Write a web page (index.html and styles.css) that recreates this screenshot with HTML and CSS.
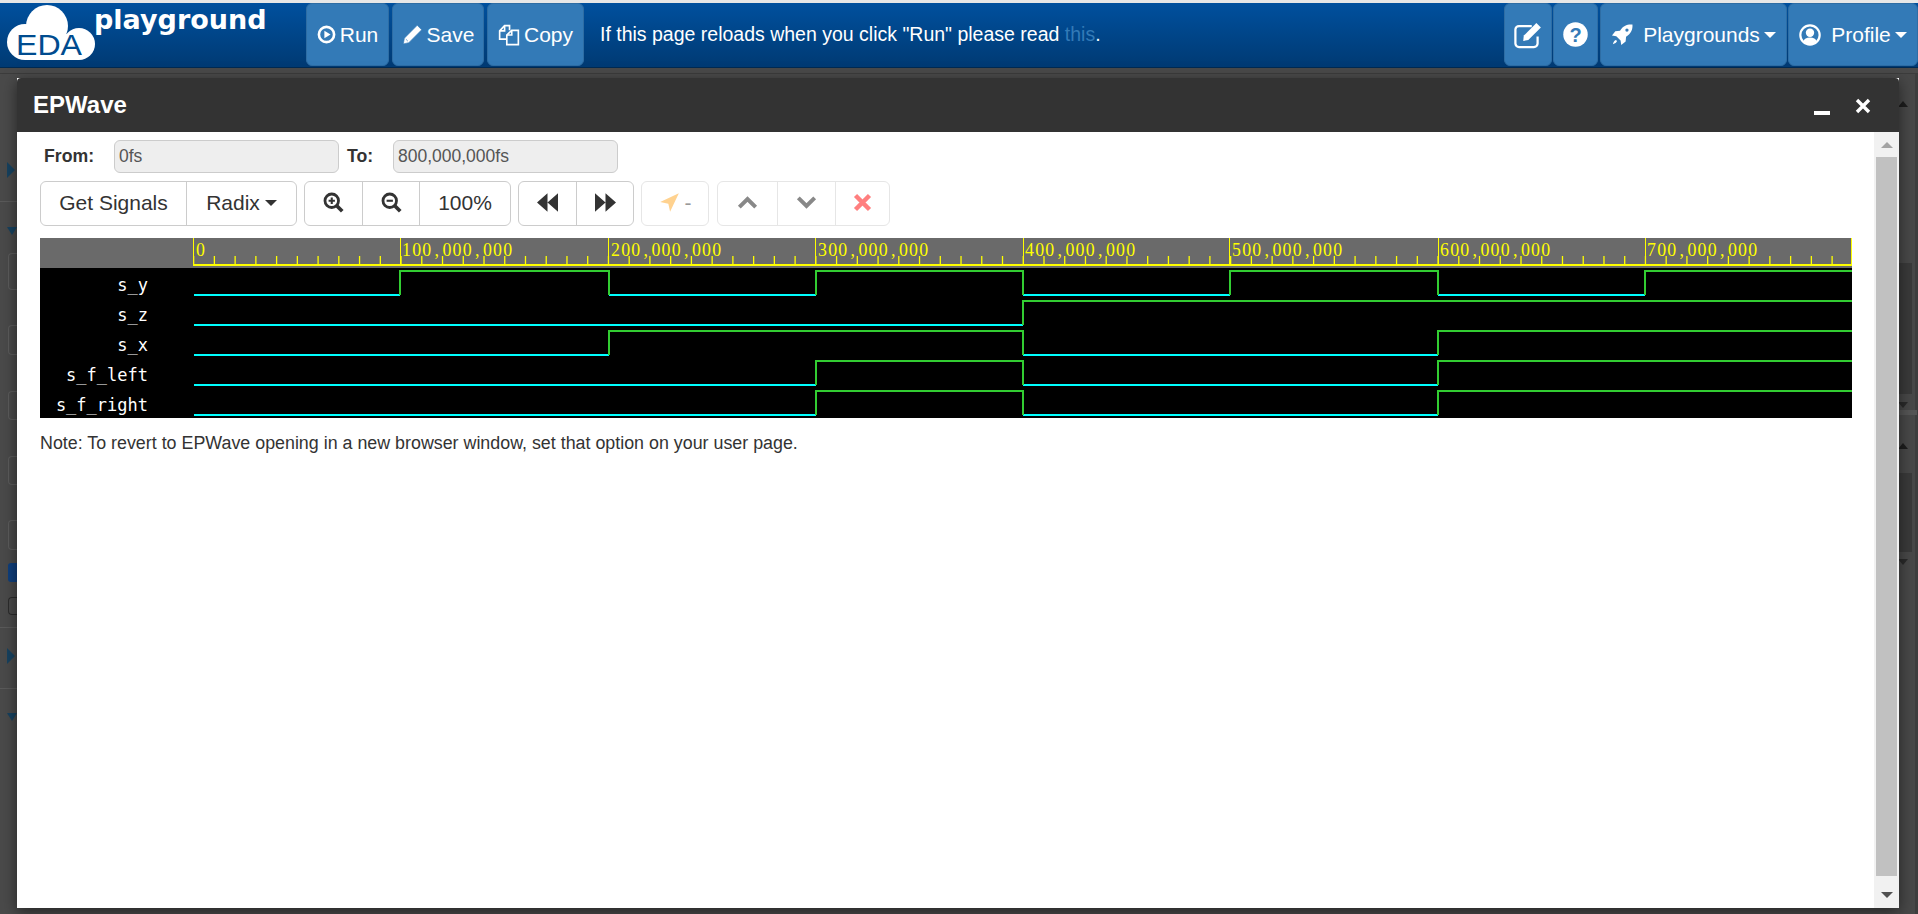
FILE: index.html
```html
<!DOCTYPE html>
<html lang="en">
<head>
  <meta charset="UTF-8">
  <title>EDA Playground - EPWave</title>
  <meta name="viewport" content="width=device-width, initial-scale=1.0">
  <link rel="stylesheet" href="styles.css">
</head>
<body>

  <nav class="navbar">
    <a class="logo">
      <svg class="logo-cloud" viewBox="0 0 92 58">
        <circle cx="42" cy="22" r="21" fill="#fff"/>
        <circle cx="20" cy="38" r="18" fill="#fff"/>
        <circle cx="74" cy="40" r="16" fill="#fff"/>
        <rect x="20" y="30" width="54" height="26" fill="#fff"/>
        <text x="11" y="51" class="logo-eda" textLength="66" lengthAdjust="spacingAndGlyphs">EDA</text>
      </svg>
      <span class="logo-word">playground</span>
    </a>

    <button class="nav-btn btn-run">
      <svg class="ico" viewBox="0 0 16 16"><circle cx="8" cy="8" r="6.400" fill="none" stroke="#fff" stroke-width="2.200"/><path d="M6.200 4.800 11.400 8 6.200 11.200z" fill="#fff"/></svg>
      Run
    </button>
    <button class="nav-btn btn-save">
      <svg class="ico ico-pencil" viewBox="0 0 16 16"><path d="M11.600 1 15 4.400 5.200 14.200 1 15.200 1.800 10.800zM2.900 11.500 4.500 13.100" fill="#fff" stroke="#337ab7" stroke-width=".5"/></svg>
      Save
    </button>
    <button class="nav-btn btn-copy">
      <svg class="ico ico-copy" viewBox="0 0 16 16" fill="none" stroke="#fff" stroke-width="1.200"><path d="M6 11H1.200V5L4.800 1.200H8.400V4.600"/><path d="M4.800 1.200V5H1.200"/><path d="M6.400 15V8L10 4.600H14.800V15z"/><path d="M10 4.600V8H6.400"/></svg>
      Copy
    </button>

    <p class="nav-msg">If this page reloads when you click "Run" please read <a class="nav-link">this</a>.</p>

    <button class="nav-btn btn-edit">
      <svg class="ico ico-edit" viewBox="0 0 20 20" fill="none" stroke="#fff" stroke-width="1.500"><path d="M12.500 4H4a2.400 2.400 0 0 0-2.400 2.400v9.200A2.400 2.400 0 0 0 4 18h10a2.400 2.400 0 0 0 2.400-2.400V11"/><path d="M7.200 10.400 15.600 2l3 3-8.400 8.400-3.400.6z" fill="#fff" stroke="none"/></svg>
    </button>
    <button class="nav-btn btn-help">
      <svg class="ico ico-lg" viewBox="0 0 20 20"><circle cx="10" cy="10" r="9.800" fill="#fff"/><text x="10" y="16" class="help-mark">?</text></svg>
    </button>
    <button class="nav-btn btn-playgrounds">
      <svg class="ico ico-rocket" viewBox="0 0 20 20"><path d="M19.500.5c.4 4.600-1.200 8.300-5.800 11.200l-.4 4.300-4 3-.6-3.900-3.900-3.900-3.900-.7 3-4 4.300-.4C11 1.500 14.900.1 19.500.5zM4.500 14.500c-1.500.5-2.300 1.700-2.800 3.800 2.100-.5 3.300-1.300 3.800-2.800z" fill="#fff"/><circle cx="14.500" cy="5.500" r="1.500" fill="#337ab7"/></svg>
      <span class="btn-label">Playgrounds</span><i class="caret"></i>
    </button>
    <button class="nav-btn btn-profile">
      <svg class="ico ico-user" viewBox="0 0 20 20"><circle cx="10" cy="10" r="8.800" fill="none" stroke="#fff" stroke-width="2"/><circle cx="10" cy="8" r="3.800" fill="#fff"/><path d="M3.800 16c.8-2.800 3-3.800 6.200-3.800s5.400 1 6.200 3.800A8.600 8.600 0 0 1 10 18.800 8.600 8.600 0 0 1 3.800 16z" fill="#fff"/></svg>
      <span class="btn-label">Profile</span><i class="caret"></i>
    </button>
  </nav>

  <main class="backdrop">
    <div class="ghost-rule"></div>
    <div class="ghost-cols">
      <div class="ghost-left">
        <i class="g-tri-right g1"></i>
        <i class="g-rule g2"></i>
        <i class="g-tri-down g3"></i>
        <i class="g-box g4"></i>
        <i class="g-box g5"></i>
        <i class="g-box g6"></i>
        <i class="g-box g7"></i>
        <i class="g-box g8"></i>
        <i class="g-check g9"></i>
        <i class="g-box g10"></i>
        <i class="g-rule g11"></i>
        <i class="g-tri-right g12"></i>
        <i class="g-rule g13"></i>
        <i class="g-tri-down g14"></i>
      </div>
      <div class="ghost-right">
        <i class="gr-up gr1"></i>
        <i class="gr-thumb gr2"></i>
        <i class="gr-down gr3"></i>
        <i class="gr-rule gr4"></i>
        <i class="gr-up gr5"></i>
        <i class="gr-thumb gr6"></i>
        <i class="gr-down gr7"></i>
      </div>
    </div>
  </main>

  <section class="modal">
    <header class="modal-head">
      <h3 class="modal-title">EPWave</h3>
      <span class="modal-min"></span>
      <svg class="modal-close" viewBox="0 0 16 16"><path d="M2 2 14 14M14 2 2 14" stroke="#fff" stroke-width="3.400" fill="none"/></svg>
    </header>

    <div class="modal-body">
      <div class="wave-page">
        <div class="range-row">
          <label class="range-label label-from">From:</label>
          <input class="range-input" type="text" value="0fs" disabled>
          <label class="range-label label-to">To:</label>
          <input class="range-input" type="text" value="800,000,000fs" disabled>
        </div>

        <div class="toolbar">
          <div class="btn-group">
            <button class="tb-btn w-signals">Get Signals</button>
            <button class="tb-btn w-radix">Radix <i class="caret caret-dark"></i></button>
          </div>
          <div class="btn-group">
            <button class="tb-btn w-zoom">
              <svg class="tb-ico" viewBox="0 0 18 18" fill="none" stroke="#333"><circle cx="7.500" cy="7.500" r="5.800" stroke-width="2.400"/><path d="M11.600 11.600 16.500 16.500" stroke-width="3.200"/><path d="M4.800 7.500h5.400M7.500 4.800v5.400" stroke-width="1.800"/></svg>
            </button>
            <button class="tb-btn w-zoom">
              <svg class="tb-ico" viewBox="0 0 18 18" fill="none" stroke="#333"><circle cx="7.500" cy="7.500" r="5.800" stroke-width="2.400"/><path d="M11.600 11.600 16.500 16.500" stroke-width="3.200"/><path d="M4.800 7.500h5.400" stroke-width="1.800"/></svg>
            </button>
            <button class="tb-btn w-pct">100%</button>
          </div>
          <div class="btn-group">
            <button class="tb-btn w-step">
              <svg class="tb-ico" viewBox="0 0 18 18" fill="#333"><path d="M9 1v16L0 9zM18 1v16L9 9z"/></svg>
            </button>
            <button class="tb-btn w-step">
              <svg class="tb-ico" viewBox="0 0 18 18" fill="#333"><path d="M0 1v16l9-8zM9 1v16l9-8z"/></svg>
            </button>
          </div>
          <div class="btn-group is-off">
            <button class="tb-btn w-marker">
              <svg class="tb-ico" viewBox="0 0 18 18" fill="#ffd28f"><path d="M17 1 9.500 17 8 10 1 8.500z"/></svg>
              <span class="marker-dash">-</span>
            </button>
          </div>
          <div class="btn-group is-off group-last">
            <button class="tb-btn w-up">
              <svg class="tb-ico" viewBox="0 0 18 18" fill="none" stroke="#888" stroke-width="3.400"><path d="M2 13 9 6l7 7"/></svg>
            </button>
            <button class="tb-btn w-down">
              <svg class="tb-ico" viewBox="0 0 18 18" fill="none" stroke="#888" stroke-width="3.400"><path d="M2 5l7 7 7-7"/></svg>
            </button>
            <button class="tb-btn w-clear">
              <svg class="tb-ico" viewBox="0 0 18 18" fill="none" stroke="#ff7f7f" stroke-width="3.800"><path d="M3 3 15 15M15 3 3 15"/></svg>
            </button>
          </div>
        </div>

        <svg class="wave" viewBox="40 238 1812 180" width="1812" height="180">
          <rect x="40" y="238" width="1812" height="30" fill="#6a6a6a"/>
          <rect x="40" y="268" width="1812" height="150" fill="#000"/>

          <path class="rule" d="M193 265H1852"/>
          <path class="ticks" d="M193 260.500H1852"/>
          <path class="major" d="M193.500 238V265M400.500 238V265M608.500 238V265M815.500 238V265M1023.500 238V265M1229.500 238V265M1438.500 238V265M1645.500 238V265M1851.500 238V265"/>

          <text class="ruler-text" x="196" y="256">0</text>
          <text class="ruler-text" x="402" y="256">100<tspan class="comma" dx="2">,</tspan>000<tspan class="comma" dx="2">,</tspan>000</text>
          <text class="ruler-text" x="611" y="256">200<tspan class="comma" dx="2">,</tspan>000<tspan class="comma" dx="2">,</tspan>000</text>
          <text class="ruler-text" x="818" y="256">300<tspan class="comma" dx="2">,</tspan>000<tspan class="comma" dx="2">,</tspan>000</text>
          <text class="ruler-text" x="1025" y="256">400<tspan class="comma" dx="2">,</tspan>000<tspan class="comma" dx="2">,</tspan>000</text>
          <text class="ruler-text" x="1232" y="256">500<tspan class="comma" dx="2">,</tspan>000<tspan class="comma" dx="2">,</tspan>000</text>
          <text class="ruler-text" x="1440" y="256">600<tspan class="comma" dx="2">,</tspan>000<tspan class="comma" dx="2">,</tspan>000</text>
          <text class="ruler-text" x="1647" y="256">700<tspan class="comma" dx="2">,</tspan>000<tspan class="comma" dx="2">,</tspan>000</text>

          <text class="sig-name" x="148" y="291">s_y</text>
          <text class="sig-name" x="148" y="321">s_z</text>
          <text class="sig-name" x="148" y="351">s_x</text>
          <text class="sig-name" x="148" y="381">s_f_left</text>
          <text class="sig-name" x="148" y="411">s_f_right</text>

          <!-- s_y -->
          <path class="low" d="M194 295H400M609 295H816M1023 295H1230M1438 295H1645"/>
          <path class="high" d="M400 295V271H609V295M816 295V271H1023V295M1230 295V271H1438V295M1645 295V271H1852"/>
          <!-- s_z -->
          <path class="low" d="M194 325H1023"/>
          <path class="high" d="M1023 325V301H1852"/>
          <!-- s_x -->
          <path class="low" d="M194 355H609M1023 355H1438"/>
          <path class="high" d="M609 355V331H1023V355M1438 355V331H1852"/>
          <!-- s_f_left -->
          <path class="low" d="M194 385H816M1023 385H1438"/>
          <path class="high" d="M816 385V361H1023V385M1438 385V361H1852"/>
          <!-- s_f_right -->
          <path class="low" d="M194 415H816M1023 415H1438"/>
          <path class="high" d="M816 415V391H1023V415M1438 415V391H1852"/>
        </svg>

        <p class="note">Note: To revert to EPWave opening in a new browser window, set that option on your user page.</p>
      </div>

      <div class="scrollbar">
        <i class="sb-up"></i>
        <i class="sb-thumb"></i>
        <i class="sb-down"></i>
      </div>
    </div>
  </section>

</body>
</html>
```
FILE: styles.css
```css
* {
  box-sizing: border-box;
}
html, body {
  height: 100%;
}
body {
  margin: 0;
  height: 914px;
  overflow: hidden;
  display: flex;
  flex-direction: column;
  font-family: 'Liberation Sans', Arial, sans-serif;
  background: #4a4a4a;
  color: #333;
}

/* top bar */
.navbar {
  flex: none;
  height: 68px;
  display: flex;
  align-items: flex-start;
  border-top: 3px solid #e7e7e7;
  border-bottom: 1px solid #002a52;
  background: linear-gradient(#00509e, #003a73);
}
.logo {
  width: 306px;
  flex: none;
  display: flex;
  align-items: flex-start;
  padding: 1px 0 0 5px;
}
.logo-cloud {
  width: 92px;
  height: 58px;
  flex: none;
}
.logo-eda {
  font-family: 'Liberation Sans', Arial, sans-serif;
  font-size: 30px;
  fill: #004c8f;
}
.logo-word {
  margin: -1px 0 0 -3px;
  font-family: 'DejaVu Sans', sans-serif;
  font-weight: bold;
  font-size: 27px;
  line-height: 34px;
  color: #fff;
}
.nav-btn {
  flex: none;
  height: 63px;
  margin-right: 3px;
  padding: 0;
  display: flex;
  align-items: center;
  justify-content: center;
  gap: 4px;
  background: #337ab7;
  border: 1px solid #2e6da4;
  border-radius: 6px;
  color: #fff;
  font-family: inherit;
  font-size: 21px;
  cursor: pointer;
}
.btn-run { width: 83px; }
.btn-save { width: 92px; }
.btn-copy { width: 97px; }
.btn-edit { width: 48px; margin-right: 1px; }
.btn-help { width: 45px; margin-right: 2px; }
.btn-playgrounds { width: 187px; margin-right: 1px; }
.btn-profile { width: 130px; margin-right: 0; }
.ico {
  width: 19px;
  height: 19px;
  flex: none;
}
.ico-pencil {
  width: 21px;
  height: 21px;
}
.ico-copy {
  width: 22px;
  height: 22px;
}
.ico-lg {
  width: 25px;
  height: 25px;
}
.ico-edit {
  width: 30px;
  height: 30px;
}
.ico-rocket {
  width: 22px;
  height: 22px;
}
.ico-user {
  width: 22px;
  height: 22px;
}
.help-mark {
  font-family: 'Liberation Sans', Arial, sans-serif;
  font-weight: bold;
  font-size: 16px;
  text-anchor: middle;
  fill: #337ab7;
}
.btn-label {
  margin-left: 6px;
}
.caret {
  display: inline-block;
  width: 0;
  height: 0;
  border-left: 6px solid transparent;
  border-right: 6px solid transparent;
  border-top: 6px solid #fff;
}
.caret-dark {
  border-top-color: #333;
  vertical-align: 2px;
}
.nav-msg {
  flex: 1;
  margin: 20px 0 0 13px;
  font-size: 19.5px;
  line-height: 22px;
  color: #fff;
}
.nav-link {
  color: #337ab7;
}

/* what shows behind the dialog */
.backdrop {
  flex: 1;
  display: flex;
  flex-direction: column;
}
.ghost-rule {
  flex: none;
  height: 6px;
  border-bottom: 1px solid #3c3c3c;
}
.ghost-cols {
  flex: 1;
  display: flex;
  justify-content: space-between;
}
.ghost-left {
  width: 17px;
  display: flex;
  flex-direction: column;
  align-items: flex-start;
  padding-left: 7px;
}
.ghost-left i {
  display: block;
  flex: none;
}
.g-tri-right {
  width: 0;
  height: 0;
  border-top: 8px solid transparent;
  border-bottom: 8px solid transparent;
  border-left: 8px solid #17425f;
}
.g-tri-down {
  width: 0;
  height: 0;
  border-left: 5px solid transparent;
  border-right: 5px solid transparent;
  border-top: 8px solid #17425f;
}
.g-rule {
  width: 17px;
  height: 1px;
  margin-left: -7px;
  background: #5a5a5a;
}
.g-box {
  width: 10px;
  height: 30px;
  margin-left: 1px;
  border: 1px solid #5c5c5c;
  border-right: none;
  border-radius: 4px 0 0 4px;
}
.g-check {
  width: 10px;
  height: 19px;
  margin-left: 1px;
  background: #0f3f7d;
  border-radius: 3px 0 0 3px;
}
.g1 { margin-top: 88px; }
.g2 { margin-top: 23px; }
.g3 { margin-top: 25px; }
.g4 { margin-top: 18px; height: 37px; }
.g5 { margin-top: 35px; }
.g6 { margin-top: 36px; height: 29px; }
.g7 { margin-top: 36px; height: 29px; }
.g8 { margin-top: 35px; }
.g9 { margin-top: 13px; }
.g10 { margin-top: 15px; height: 18px; border-color: #2c2c2c; }
.g11 { margin-top: 12px; }
.g12 { margin-top: 20px; }
.g13 { margin-top: 24px; }
.g14 { margin-top: 24px; }

.ghost-right {
  width: 19px;
  display: flex;
  flex-direction: column;
  align-items: center;
  background: #484848;
  border-right: 3px solid #3e3e3e;
}
.ghost-right i {
  display: block;
  flex: none;
}
.gr-up, .gr-down {
  width: 0;
  height: 0;
  margin-right: 8px;
  border-left: 5px solid transparent;
  border-right: 5px solid transparent;
}
.gr-up {
  border-bottom: 6px solid #1d1d1d;
}
.gr-down {
  border-top: 6px solid #2a2a2a;
}
.gr-thumb {
  width: 13px;
  margin-right: 3px;
  background: #3a3a3a;
}
.gr-rule {
  width: 19px;
  height: 5px;
  background: #555;
}
.gr1 { margin-top: 27px; }
.gr2 { margin-top: 156px; height: 131px; }
.gr3 { margin-top: 8px; }
.gr4 { margin-top: 2px; }
.gr5 { margin-top: 28px; }
.gr6 { margin-top: 24px; height: 79px; }
.gr7 { margin-top: 7px; }

/* the EPWave dialog */
.modal {
  position: absolute;
  left: 17px;
  top: 78px;
  width: 1882px;
  height: 830px;
  display: flex;
  flex-direction: column;
  background: #fff;
  box-shadow: 0 4px 14px rgba(0, 0, 0, .5);
}
.modal-head {
  flex: none;
  height: 54px;
  display: flex;
  align-items: flex-start;
  background: #333;
  border-radius: 4px 4px 0 0;
}
.modal-title {
  flex: 1;
  margin: 12px 0 0 16px;
  font-size: 24px;
  line-height: 30px;
  color: #fff;
}
.modal-min {
  width: 16px;
  height: 4px;
  margin: 33px 25px 0 0;
  background: #fff;
}
.modal-close {
  width: 16px;
  height: 16px;
  margin: 20px 28px 0 0;
}
.modal-body {
  flex: 1;
  display: flex;
  min-height: 0;
}
.wave-page {
  flex: 1;
  padding: 8px 0 0 23px;
}

.range-row {
  height: 33px;
  display: flex;
  align-items: center;
}
.range-label {
  font-weight: bold;
  font-size: 17.7px;
}
.label-from {
  width: 74px;
  padding-left: 4px;
}
.label-to {
  width: 54px;
  padding-left: 8px;
}
.range-input {
  width: 225px;
  height: 33px;
  padding: 0 4px;
  background: #eee;
  border: 1px solid #ccc;
  border-radius: 6px;
  font-family: inherit;
  font-size: 17.5px;
  color: #555;
}

.toolbar {
  margin-top: 8px;
  display: flex;
  gap: 7px;
}
.btn-group {
  display: flex;
  height: 45px;
  background: #fff;
  border: 1px solid #ccc;
  border-radius: 6px;
}
.is-off {
  border-color: #e6e6e6;
}
.group-last {
  margin-left: 1px;
}
.tb-btn {
  display: flex;
  align-items: center;
  justify-content: center;
  gap: 5px;
  padding: 0 0 2px;
  background: none;
  border: none;
  border-left: 1px solid #ccc;
  font-family: inherit;
  font-size: 21px;
  color: #333;
}
.tb-btn:first-child {
  border-left: none;
}
.is-off .tb-btn {
  border-left-color: #e6e6e6;
}
.is-off .tb-btn:first-child {
  border-left: none;
}
.w-signals { width: 145px; }
.w-radix { width: 110px; gap: 0; }
.w-radix .caret { margin-left: 5px; }
.w-zoom { width: 57px; }
.w-pct { width: 91px; }
.w-step { width: 57px; }
.w-marker { width: 66px; }
.w-up { width: 59px; }
.w-down { width: 58px; }
.w-clear { width: 54px; }
.tb-ico {
  width: 21px;
  height: 21px;
  flex: none;
}
.marker-dash {
  color: #999;
}

.wave {
  display: block;
  margin-top: 12px;
}
.rule {
  stroke: #ffff00;
  stroke-width: 2;
  fill: none;
}
.ticks {
  stroke: #ffff00;
  stroke-width: 9;
  stroke-dasharray: 1.3 19.44;
  fill: none;
}
.major {
  stroke: #ffff00;
  stroke-width: 1;
  fill: none;
}
.ruler-text {
  font-family: 'Liberation Serif', serif;
  font-size: 17.8px;
  letter-spacing: 1.25px;
  fill: #ffff00;
}
.comma {
  letter-spacing: 3.6px;
}
.sig-name {
  font-family: 'DejaVu Sans Mono', monospace;
  font-size: 17px;
  fill: #fff;
  text-anchor: end;
}
.low {
  stroke: #00ffff;
  stroke-width: 2;
  fill: none;
}
.high {
  stroke: #32cd32;
  stroke-width: 2;
  fill: none;
}
.note {
  margin: 14px 0 0;
  font-size: 17.85px;
  line-height: 22px;
  color: #333;
}

/* scrollbar */
.scrollbar {
  flex: none;
  width: 25px;
  display: flex;
  flex-direction: column;
  align-items: center;
  background: #f1f1f1;
}
.scrollbar i {
  display: block;
  flex: none;
}
.sb-up, .sb-down {
  width: 0;
  height: 0;
  border-left: 6px solid transparent;
  border-right: 6px solid transparent;
}
.sb-up {
  margin-top: 10px;
  border-bottom: 6px solid #a3a3a3;
}
.sb-thumb {
  width: 21px;
  height: 719px;
  margin-top: 9px;
  background: #c1c1c1;
}
.sb-down {
  margin-top: 16px;
  border-top: 6px solid #505050;
}
```
